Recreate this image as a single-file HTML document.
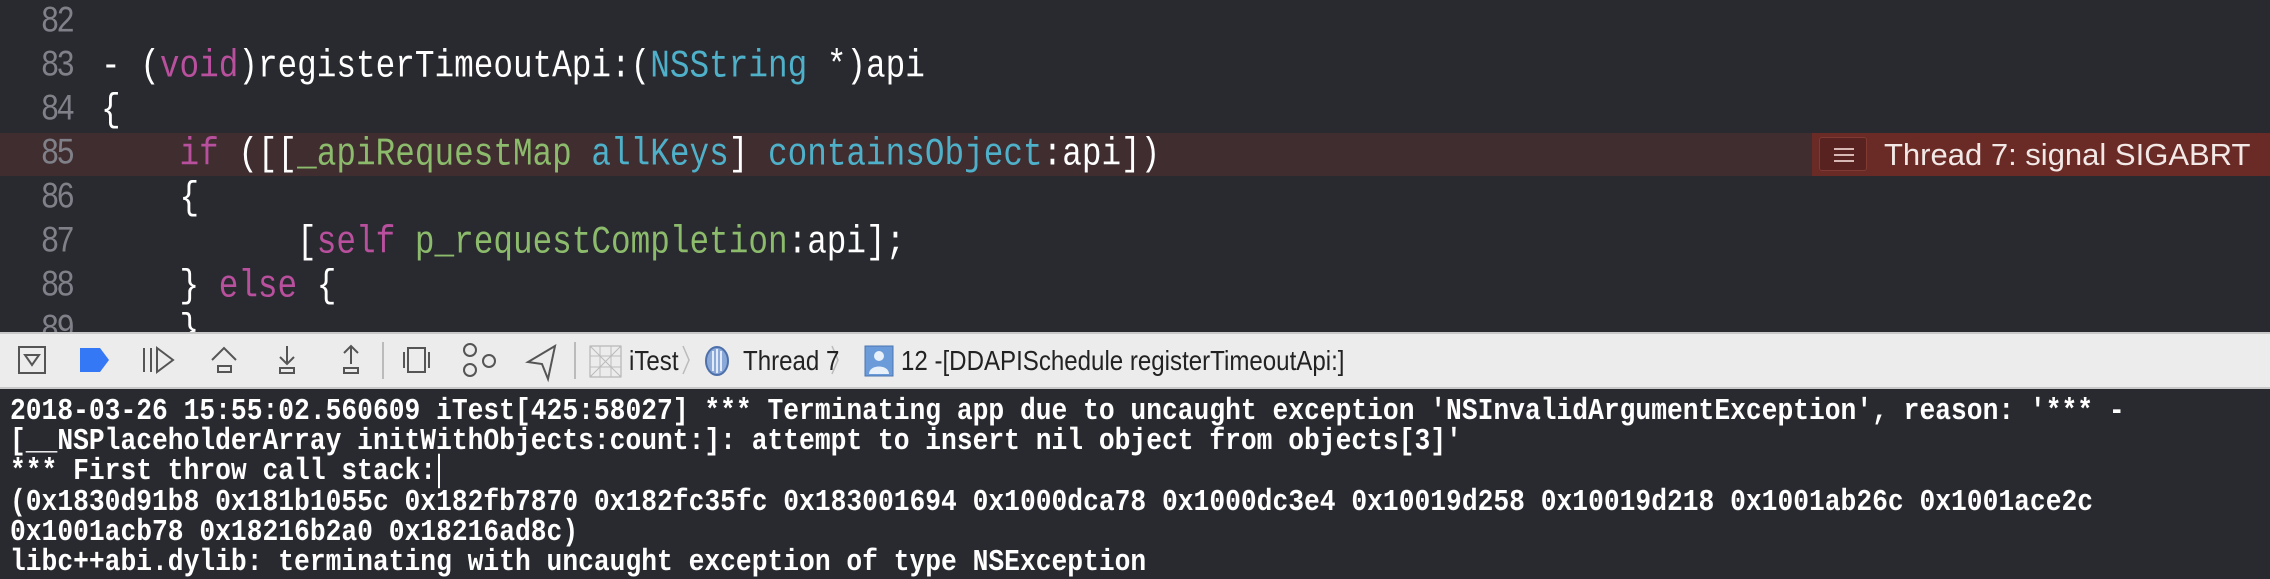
<!DOCTYPE html>
<html><head><meta charset="utf-8"><style>
*{margin:0;padding:0;box-sizing:border-box}
body{width:2270px;height:578px;overflow:hidden;background:#292a30;position:relative;font-family:"Liberation Mono",monospace}
.ed{position:absolute;left:0;top:0;width:2270px;height:332px;background:#292a30;overflow:hidden}
.ln{position:absolute;left:0;width:72px;text-align:right;color:#7f8088;font-size:31px;line-height:44px;letter-spacing:-3px;transform:scaleY(1.2)}
.cd{position:absolute;left:101px;color:#fff;font-size:32.7px;line-height:44px;white-space:pre;transform:scaleY(1.2)}
.k{color:#b9509e}.t{color:#4fb0c9}.g{color:#8cbb6c}
.hl{position:absolute;left:0;top:133px;width:2270px;height:43px;background:#3f2d30}
.err{position:absolute;left:1812px;top:133px;width:458px;height:43px;background:#6a2b27}
.badge{position:absolute;left:1819px;top:137px;width:48px;height:34px;background:#57221f;border:1px solid #7e3a33;border-radius:3px}
.badge i{position:absolute;left:14px;width:20px;height:2px;background:#d8b8b4}
.et{position:absolute;left:1884px;top:133px;line-height:43px;font-family:"Liberation Sans",sans-serif;font-size:31px;color:#f2e8e6}
.tb{position:absolute;left:0;top:332px;width:2270px;height:57px;background:#ececec;border-top:2px solid #c8c8c8;border-bottom:2px solid #c8c8c8}
.tb svg{position:absolute;top:0}
.tt{position:absolute;top:0;line-height:53px;font-family:"Liberation Sans",sans-serif;font-size:28px;color:#222;white-space:pre;transform:scaleX(0.86);transform-origin:0 50%}
.con{position:absolute;left:10px;top:396px;color:#fff;font-size:26.3px;line-height:30.2px;font-weight:bold;white-space:pre}
.con div{transform:scaleY(1.15);transform-origin:0 50%}
</style></head><body>
<div class="ed">
<div class="hl"></div><div class="err"></div>
<div class="badge"><i style="top:10px"></i><i style="top:16px"></i><i style="top:22px"></i></div>
<div class="et">Thread 7: signal SIGABRT</div>
<div class="ln" style="top:1px">82</div>
<div class="ln" style="top:45px">83</div>
<div class="ln" style="top:89px">84</div>
<div class="ln" style="top:133px">85</div>
<div class="ln" style="top:177px">86</div>
<div class="ln" style="top:221px">87</div>
<div class="ln" style="top:265px">88</div>
<div class="ln" style="top:309px">89</div>
<div class="cd" style="top:45px">- (<span class="k">void</span>)registerTimeoutApi:(<span class="t">NSString</span> *)api</div>
<div class="cd" style="top:89px">{</div>
<div class="cd" style="top:133px">    <span class="k">if</span> ([[<span class="g">_apiRequestMap</span> <span class="t">allKeys</span>] <span class="t">containsObject</span>:api])</div>
<div class="cd" style="top:177px">    {</div>
<div class="cd" style="top:221px">          [<span class="k">self</span> <span class="g">p_requestCompletion</span>:api];</div>
<div class="cd" style="top:265px">    } <span class="k">else</span> {</div>
<div class="cd" style="top:309px">    }</div>
</div>
<div class="tb">
<svg width="2270" height="53" viewBox="0 0 2270 53" fill="none" stroke="#555" stroke-width="2">
<rect x="19" y="13" width="26" height="26"/><path d="M25 21h14l-7 10z"/>
<path d="M80 14h20l9 12-9 12h-20z" fill="#3478f6" stroke="none"/>
<path d="M144 14v24M151 14v24M157 14l16 12-16 12z"/>
<path d="M212 26l12-12 12 12M218 32h13v6h-13z"/>
<path d="M287 12v18M280 23l7 7 7-7M280 34h14v5h-14z"/>
<path d="M351 12v18M344 19l7-7 7 7M344 34h14v5h-14z"/>
<path d="M383 8v37" stroke="#bbb"/>
<path d="M408 14h17v24h-17zM404 18v16M429 18v16"/>
<circle cx="470" cy="16" r="6"/><circle cx="470" cy="36" r="6"/><circle cx="489" cy="27" r="6"/>
<path d="M555 12l-27 16 14 2 6 15z"/>
<path d="M575 8v37" stroke="#bbb"/>
<rect x="590" y="12" width="31" height="31" stroke="#aaa" stroke-width="1"/><path d="M590 22h31M590 33h31M600 12v31M611 12v31M590 12l31 31M621 12l-31 31" stroke="#bbb" stroke-width="1"/>
<path d="M683 12l6 14-6 14M832 12l6 14-6 14" stroke="#bbb" stroke-width="1.5"/>
<ellipse cx="717" cy="27" rx="11" ry="14" fill="#8aa9d9" stroke="#4d70ab"/><path d="M713 17v20M717 15v24M721 17v20" stroke="#fff" stroke-width="1.5"/>
<rect x="865" y="12" width="28" height="30" fill="#6b9bd8" stroke="#4b76b0" stroke-width="1"/><circle cx="879" cy="22" r="5" fill="#e8f0fa" stroke="none"/><path d="M869 40c0-10 20-10 20 0z" fill="#e8f0fa" stroke="none"/>
</svg>
<div class="tt" style="left:629px">iTest</div>
<div class="tt" style="left:743px">Thread 7</div>
<div class="tt" style="left:901px">12 -[DDAPISchedule registerTimeoutApi:]</div>
</div>
<div class="con"><div>2018-03-26 15:55:02.560609 iTest[425:58027] *** Terminating app due to uncaught exception 'NSInvalidArgumentException', reason: '*** -</div><div>[__NSPlaceholderArray initWithObjects:count:]: attempt to insert nil object from objects[3]'</div><div>*** First throw call stack:<span style="border-left:2px solid #fff;margin-left:2px"></span></div><div>(0x1830d91b8 0x181b1055c 0x182fb7870 0x182fc35fc 0x183001694 0x1000dca78 0x1000dc3e4 0x10019d258 0x10019d218 0x1001ab26c 0x1001ace2c</div><div>0x1001acb78 0x18216b2a0 0x18216ad8c)</div><div>libc++abi.dylib: terminating with uncaught exception of type NSException</div></div>
</body></html>
